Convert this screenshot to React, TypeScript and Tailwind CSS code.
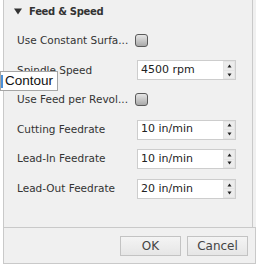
import React from "react";

function Spinner({ value }: { value: string }) {
  return (
    <div className="flex h-[20px] w-[99px] border border-[#cdcdcd] bg-white">
      <div className="flex flex-1 items-center pl-[3px] text-[11px] text-[#222]">{value}</div>
      <div className="flex w-[12px] flex-col gap-px bg-[#e4e4e4] p-px">
        <div className="flex flex-1 items-center justify-center bg-[#ececec]">
          <svg width="5" height="4" viewBox="0 0 5 4">
            <path d="M2.5 0.5 L4.5 3.5 L0.5 3.5 Z" fill="#222" />
          </svg>
        </div>
        <div className="flex flex-1 items-center justify-center bg-[#ececec]">
          <svg width="5" height="4" viewBox="0 0 5 4">
            <path d="M0.5 0.5 L4.5 0.5 L2.5 3.5 Z" fill="#222" />
          </svg>
        </div>
      </div>
    </div>
  );
}

function Checkbox() {
  return (
    <div className="ml-[-2px] h-[13px] w-[13px] rounded-[3px] border border-[#5a5a5a] bg-gradient-to-b from-[#e6e6e6] to-[#a9a9a9]" />
  );
}

export default function App() {
  const rows: { label: string; kind: "check" | "spin"; value?: string }[] = [
    { label: "Use Constant Surfa...", kind: "check" },
    { label: "Spindle Speed", kind: "spin", value: "4500 rpm" },
    { label: "Use Feed per Revol...", kind: "check" },
    { label: "Cutting Feedrate", kind: "spin", value: "10 in/min" },
    { label: "Lead-In Feedrate", kind: "spin", value: "10 in/min" },
    { label: "Lead-Out Feedrate", kind: "spin", value: "20 in/min" },
  ];

  return (
    <div className="relative h-[275px] w-[256px] overflow-hidden bg-white font-['DejaVu_Sans',sans-serif]">
      <div className="ml-[3px] flex h-[264px] w-[253px] flex-col border-b border-l border-[#c9c9c9] bg-[#f0f0f0]">
        {/* content */}
        <div className="flex h-[227px] w-[249px] flex-col border-r border-[#c9c9c9]">
          <div className="flex h-[26px] items-center gap-[7px] pl-[10px] pb-[3px]">
            <svg width="8" height="7" viewBox="0 0 8 7">
              <path d="M0 0.5 L8 0.5 L4 6.5 Z" fill="#333" />
            </svg>
            <span className="text-[10px] font-bold tracking-[-0.3px] text-[#333]">Feed &amp; Speed</span>
          </div>
          {rows.map((r) => (
            <div key={r.label} className="flex h-[29.6px] items-center">
              <div className="w-[133px] pl-[13px] text-[10.5px] text-[#333]">{r.label}</div>
              {r.kind === "check" ? <Checkbox /> : <Spinner value={r.value ?? ""} />}
            </div>
          ))}
        </div>
        {/* footer */}
        <div className="flex flex-1 items-start justify-end gap-[6px] border-t border-r border-[#c9c9c9] pt-[8px] pr-[7px]">
          <button className="h-[20px] w-[61px] border border-[#c3c3c3] bg-gradient-to-b from-[#f4f4f4] to-[#e6e6e6] text-[12px] text-[#444]">
            OK
          </button>
          <button className="h-[20px] w-[61px] border border-[#c3c3c3] bg-gradient-to-b from-[#f4f4f4] to-[#e6e6e6] text-[12px] text-[#444]">
            Cancel
          </button>
        </div>
      </div>

      {/* tooltip */}
      <div className="absolute left-0 top-[71px] flex h-[20px] w-[58px] items-center border border-[#a6a6a6] bg-white pl-[4px] font-['Liberation_Sans',sans-serif] text-[13.5px] text-[#111]">
        <div className="absolute left-0 top-[3px] h-[13px] w-[2px] bg-[#4a90d9]" />
        Contour
      </div>
    </div>
  );
}
